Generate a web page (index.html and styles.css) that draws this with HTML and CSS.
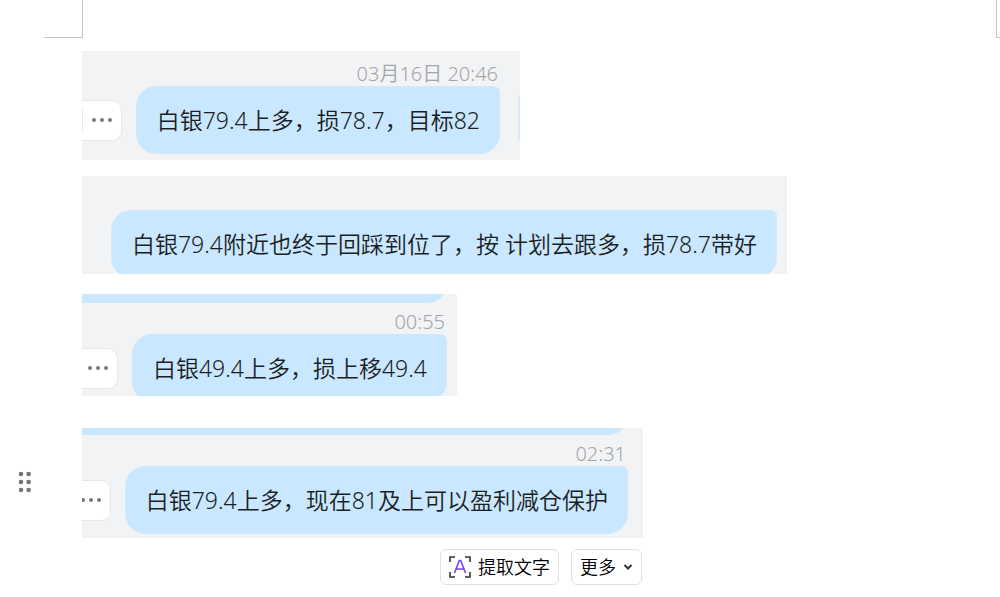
FILE: index.html
```
<!DOCTYPE html>
<html lang="zh-CN">
<head>
  <meta charset="UTF-8">
  <meta name="viewport" content="width=device-width, initial-scale=1.0">
  <title>白银记录</title>
  <link rel="stylesheet" href="styles.css">
</head>
<body>
  <!-- Page corner marks -->
  <header class="page-marks">
    <span class="mark mark-left"></span>
    <span class="mark mark-right"></span>
  </header>

  <main class="document">
    <section class="block">
      <div class="snip snip-first">
        <time class="time">03月16日 20:46</time>
        <div class="row">
          <button class="more divided" type="button" aria-label="更多操作"><i></i><i></i><i></i></button>
          <p class="bubble">白银79.4上多，损78.7，目标82</p>
        </div>
        <span class="avatar-edge"></span>
      </div>
    </section>

    <section class="block">
      <div class="snip snip-second">
        <div class="row">
          <p class="bubble">白银79.4附近也终于回踩到位了，按 计划去跟多，损78.7带好</p>
        </div>
      </div>
    </section>

    <section class="block">
      <div class="snip snip-third">
        <div class="previous"><span></span></div>
        <time class="time">00:55</time>
        <div class="row">
          <button class="more" type="button" aria-label="更多操作"><i></i><i></i><i></i></button>
          <p class="bubble">白银49.4上多，损上移49.4</p>
        </div>
      </div>
    </section>

    <!-- Selected block with drag handle and toolbar -->
    <section class="block">
      <button class="handle" type="button" aria-label="拖动">
        <svg width="14" height="24" viewBox="0 0 14 24" fill="#757575">
          <circle cx="3" cy="3" r="2.3"/><circle cx="10.6" cy="3" r="2.3"/>
          <circle cx="3" cy="11" r="2.3"/><circle cx="10.6" cy="11" r="2.3"/>
          <circle cx="3" cy="19" r="2.3"/><circle cx="10.6" cy="19" r="2.3"/>
        </svg>
      </button>
      <div class="snip snip-fourth">
        <div class="previous"><span></span></div>
        <time class="time">02:31</time>
        <div class="row">
          <button class="more" type="button" aria-label="更多操作"><i></i><i></i><i></i></button>
          <p class="bubble">白银79.4上多，现在81及上可以盈利减仓保护</p>
        </div>
      </div>
      <div class="toolbar">
        <button class="tool" type="button">
          <svg width="22" height="22" viewBox="0 0 22 22" fill="none" stroke-width="1.6">
            <path d="M1 6V1h5M16 1h5v5M21 16v5h-5M6 21H1v-5" stroke="#333"/>
            <path d="M5.5 17L10.3 4.5h1.4L16.5 17M7.3 13h7.4" stroke="#7b3ff2"/>
          </svg>
          提取文字
        </button>
        <button class="tool" type="button">
          更多
          <svg width="10" height="8" viewBox="0 0 10 8" fill="none" stroke="#333" stroke-width="2">
            <path d="M1.5 2L5 5.5 8.5 2"/>
          </svg>
        </button>
      </div>
    </section>
  </main>
</body>
</html>
```

FILE: styles.css
```
* {
  box-sizing: border-box;
}

body {
  margin: 0;
  background: #fff;
  color: #1b1e22;
  font-family: "Noto Sans", "Noto Sans CJK SC", sans-serif;
  font-weight: 350;
}

button {
  padding: 0;
  border: 0;
  background: none;
  color: inherit;
  font: inherit;
  cursor: pointer;
}

/* Page corner marks */
.page-marks {
  display: flex;
  justify-content: space-between;
  padding-left: 44px;
}

.mark {
  height: 38px;
  border-bottom: 1px solid #c4c4c4;
}

.mark-left {
  width: 39px;
  border-right: 1px solid #c4c4c4;
}

.mark-right {
  width: 4px;
  border-left: 1px solid #c4c4c4;
}

/* Blocks */
.document {
  padding-top: 13px;
}

.block {
  display: grid;
  grid-template-columns: 82px minmax(0, 1fr);
  align-items: center;
  margin-bottom: 16px;
}

.block:nth-child(2) {
  margin-bottom: 20px;
}

.block:nth-child(3) {
  margin-bottom: 32px;
}

.handle {
  display: flex;
  margin-left: 18px;
  width: 14px;
}

/* Chat snippets */
.snip {
  grid-column: 2;
  position: relative;
  display: flex;
  flex-direction: column;
  max-width: 100%;
  overflow: hidden;
  background: #f2f3f5;
}

.snip-first {
  width: 438px;
  height: 109px;
  padding: 11px 20px 0 0;
}

.snip-second {
  width: 705px;
  height: 98px;
  padding: 34px 10px 0 0;
}

.snip-third {
  width: 375px;
  height: 102px;
  padding-right: 10px;
}

.snip-fourth {
  width: 561px;
  height: 110px;
  padding-right: 15px;
}

/* Bottom edge of the message above */
.previous {
  display: flex;
  flex: none;
  align-items: flex-end;
  height: 9px;
  margin-bottom: 7px;
  overflow: hidden;
}

.snip-fourth .previous {
  height: 7px;
}

.previous span {
  flex: 1;
  height: 40px;
  border-radius: 0 0 20px 0;
  background: #c9e7ff;
}

.time {
  flex: none;
  padding-right: 2px;
  color: #a3a5a8;
  font-size: 20px;
  line-height: 24px;
  text-align: right;
}

.row {
  display: flex;
  flex: none;
  align-items: center;
  justify-content: flex-end;
  gap: 14px;
}

.bubble {
  flex: none;
  margin: 0;
  padding: 17px 19px 17px 20px;
  border: 1px solid #d3e9fb;
  border-radius: 20px 6px 20px 20px;
  background: #c9e7ff;
  font-size: 23px;
  line-height: 32px;
  white-space: nowrap;
}

.more {
  display: flex;
  flex: none;
  align-items: center;
  justify-content: flex-end;
  gap: 4px;
  width: 80px;
  height: 41px;
  padding-right: 9px;
  border: 1px solid #e6e7e9;
  border-radius: 10px;
  background: #fff;
}

.more i {
  width: 4px;
  height: 4px;
  border-radius: 50%;
  background: #777;
}

.divided::before {
  content: "";
  width: 1px;
  height: 22px;
  margin-right: 5px;
  background: #e6e7e9;
}

.avatar-edge {
  position: absolute;
  top: 44px;
  right: 0;
  width: 2px;
  height: 46px;
  background: #dcebfc;
}

/* Toolbar under the selected block */
.toolbar {
  grid-column: 2;
  display: flex;
  justify-content: flex-end;
  gap: 12px;
  width: 560px;
  max-width: 100%;
  margin-top: 11px;
}

.tool {
  display: flex;
  align-items: center;
  gap: 7px;
  height: 36px;
  padding: 0 8px;
  border: 1px solid #e0e0e0;
  border-radius: 6px;
  background: #fff;
  color: #000;
  font-size: 18px;
  line-height: 24px;
}
```
